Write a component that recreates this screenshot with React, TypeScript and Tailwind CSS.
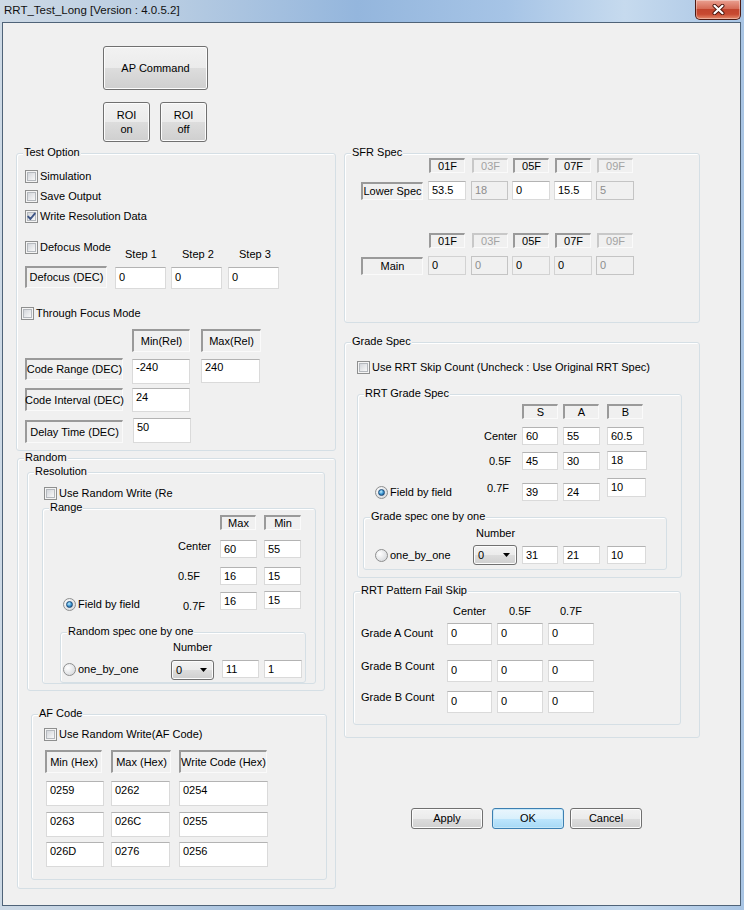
import React from "react";

const cx = (...a: (string | false | undefined | null)[]) => a.filter(Boolean).join(" ");

type P = { className?: string; children?: React.ReactNode };

function Group({ legend, className, children }: P & { legend: string }) {
  return (
    <div
      className={cx(
        "relative shrink-0 flex flex-col items-start border border-[#d5dfe5] rounded-[3px] shadow-[inset_1px_1px_0_#ffffff]",
        className
      )}
    >
      <span className="absolute top-[-8px] left-[6px] bg-[#f0f0f0] px-[1px] leading-[13px] whitespace-nowrap">
        {legend}
      </span>
      {children}
    </div>
  );
}

function Chk({ checked, label, className }: { checked?: boolean; label: string; className?: string }) {
  return (
    <div className={cx("flex items-center h-[13px] shrink-0", className)}>
      <span className="relative w-[13px] h-[13px] shrink-0 border border-[#8e8f8f] bg-[#f4f4f4] p-[1px] flex">
        <span className="flex-1 border border-[#b4b8bd] bg-[linear-gradient(135deg,#d3d6db,#f8f8f8)]" />
        {checked && (
          <svg className="absolute left-[0px] top-[0px]" width="11" height="11" viewBox="0 0 11 11">
            <path d="M2.2 5.6 L4.4 8 L8.8 2.6" fill="none" stroke="#3d5586" strokeWidth="1.9" strokeLinecap="round" strokeLinejoin="round" />
          </svg>
        )}
      </span>
      <span className="ml-[2px] whitespace-nowrap">{label}</span>
    </div>
  );
}

function Radio({ checked, label, className }: { checked?: boolean; label: string; className?: string }) {
  return (
    <div className={cx("flex items-center h-[13px] shrink-0", className)}>
      <span className="relative w-[13px] h-[13px] shrink-0 rounded-full border border-[#8e8f8f] bg-[radial-gradient(circle_at_35%_35%,#ffffff,#cfd2d6)]">
        {checked && (
          <span className="absolute left-[2px] top-[2px] w-[7px] h-[7px] rounded-full border border-[#1c4a78] bg-[radial-gradient(circle_at_40%_35%,#c4efff_0%,#3d98d4_50%,#143f73_100%)]" />
        )}
      </span>
      <span className="ml-[2px] whitespace-nowrap">{label}</span>
    </div>
  );
}

function Lbl({ children, className, dis }: P & { dis?: boolean }) {
  return (
    <div
      className={cx(
        "shrink-0 flex items-center justify-center whitespace-nowrap border-t-2 border-l-2 border-r border-b border-r-[#fafafa] border-b-[#fafafa]",
        dis ? "border-t-[#c8c8c8] border-l-[#c8c8c8] text-[#a3a3a3]" : "border-t-[#9a9a9a] border-l-[#9a9a9a]",
        className
      )}
    >
      {children}
    </div>
  );
}

function Edit({ v, className, dis, ro }: { v: string; className?: string; dis?: boolean; ro?: boolean }) {
  return (
    <div
      className={cx(
        "shrink-0 border pl-[3px] leading-[13px] whitespace-nowrap overflow-hidden",
        dis
          ? "bg-[#f0f0f0] border-[#c4c4c4] text-[#8d8d8d]"
          : ro
          ? "bg-[#f0f0f0] border-[#d2d2d2]"
          : "bg-white border-[#dadada] border-t-[#b3b3b3]",
        className
      )}
    >
      {v}
    </div>
  );
}

function Btn({ children, className, def }: P & { def?: boolean }) {
  return (
    <div
      className={cx(
        "shrink-0 flex items-center justify-center text-center rounded-[3px] border leading-[13px]",
        def
          ? "border-[#3c7fb1] bg-[linear-gradient(#eaf6fd_0%,#d9f0fc_50%,#bee6fd_50%,#a7d9f5_100%)] shadow-[inset_0_0_0_1px_#c6e7f8]"
          : "border-[#707070] bg-[linear-gradient(#f2f2f2_0%,#ebebeb_50%,#dddddd_50%,#cfcfcf_100%)] shadow-[inset_0_0_0_1px_#fcfcfc]",
        className
      )}
    >
      {children}
    </div>
  );
}

function Combo({ v, className }: { v: string; className?: string }) {
  return (
    <div
      className={cx(
        "shrink-0 flex items-center justify-between rounded-[3px] border border-[#707070] bg-[linear-gradient(#f2f2f2_0%,#ebebeb_50%,#dddddd_50%,#cfcfcf_100%)] shadow-[inset_0_0_0_1px_#fcfcfc] pl-[4px] pr-[6px]",
        className
      )}
    >
      <span>{v}</span>
      <svg width="7" height="4" viewBox="0 0 7 4">
        <path d="M0 0 H7 L3.5 4 Z" fill="#000" />
      </svg>
    </div>
  );
}

function HdrRow({ className }: { className?: string }) {
  return (
    <div className={cx("flex items-start ml-[84px]", className)}>
      <Lbl className="w-[36px] h-[15px]">01F</Lbl>
      <Lbl dis className="ml-[7px] w-[36px] h-[15px]">03F</Lbl>
      <Lbl className="ml-[5px] w-[36px] h-[15px]">05F</Lbl>
      <Lbl className="ml-[6px] w-[36px] h-[15px]">07F</Lbl>
      <Lbl dis className="ml-[6px] w-[36px] h-[15px]">09F</Lbl>
    </div>
  );
}

export default function App() {
  return (
    <div className="w-[744px] h-[910px] flex flex-col overflow-hidden bg-[linear-gradient(90deg,#cdd9e5_0%,#b9cde2_22%,#94b6dd_48%,#a6c4e6_68%,#c6daee_84%,#a9c5e4_100%)] font-['Liberation_Sans',Arial,sans-serif] text-[11px] leading-[13px] text-black">
      {/* title bar */}
      <div className="h-[22px] shrink-0 flex items-start">
        <div className="pl-[4px] pt-[3px] text-[11.5px] leading-[15px] whitespace-nowrap text-[#111]">
          RRT_Test_Long [Version : 4.0.5.2]
        </div>
        <div className="ml-auto mr-[3px] w-[46px] h-[20px] rounded-b-[5px] border border-t-0 border-[#4d1a12] bg-[linear-gradient(#eaa192_0%,#d66c57_45%,#c2452e_50%,#c84a31_75%,#e58a6c_100%)] shadow-[inset_0_0_0_1px_rgba(255,255,255,0.35)] flex items-center justify-center">
          <svg width="13" height="11" viewBox="0 0 13 11">
            <path d="M2.5 1.8 L10.5 9.2 M10.5 1.8 L2.5 9.2" stroke="#4a140c" strokeWidth="4" strokeLinecap="round" />
            <path d="M2.5 1.8 L10.5 9.2 M10.5 1.8 L2.5 9.2" stroke="#ffffff" strokeWidth="2.2" strokeLinecap="round" />
          </svg>
        </div>
      </div>

      {/* client area */}
      <div className="ml-[2px] mr-[3px] h-[884px] shrink-0 border border-[#4f6378] bg-[#f0f0f0] flex items-start">
        {/* left column */}
        <div className="ml-[13px] w-[320px] shrink-0 flex flex-col items-start">
          <Btn className="ml-[87px] mt-[23px] w-[105px] h-[44px]">AP Command</Btn>
          <div className="ml-[87px] mt-[12px] flex gap-[10px]">
            <Btn className="w-[47px] h-[40px] leading-[14px]">
              <span>
                ROI
                <br />
                on
              </span>
            </Btn>
            <Btn className="w-[47px] h-[40px] leading-[14px]">
              <span>
                ROI
                <br />
                off
              </span>
            </Btn>
          </div>

          <Group legend="Test Option" className="mt-[11px] w-[320px] h-[298px]">
            <Chk className="mt-[16px] ml-[8px]" label="Simulation" />
            <Chk className="mt-[7px] ml-[8px]" label="Save Output" />
            <Chk className="mt-[7px] ml-[8px]" checked label="Write Resolution Data" />

            <div className="mt-[17px] ml-[8px] flex items-start">
              <Chk className="mt-[1px] w-[100px]" label="Defocus Mode" />
              <div className="mt-[8px] w-[57px]">Step 1</div>
              <div className="mt-[8px] w-[57px]">Step 2</div>
              <div className="mt-[8px] w-[57px]">Step 3</div>
            </div>

            <div className="mt-[5px] ml-[8px] flex items-start">
              <Lbl className="w-[82px] h-[22px]">Defocus (DEC)</Lbl>
              <Edit v="0" className="ml-[8px] mt-[1px] w-[51px] h-[22px] pt-[3px]" />
              <Edit v="0" className="ml-[5px] mt-[1px] w-[51px] h-[22px] pt-[3px]" />
              <Edit v="0" className="ml-[6px] mt-[1px] w-[51px] h-[22px] pt-[3px]" />
            </div>

            <Chk className="mt-[18px] ml-[4px]" label="Through Focus Mode" />

            <div className="mt-[9px] ml-[115px] flex items-start">
              <Lbl className="w-[58px] h-[23px]">Min(Rel)</Lbl>
              <Lbl className="ml-[11px] w-[60px] h-[23px]">Max(Rel)</Lbl>
            </div>

            <div className="mt-[6px] ml-[8px] flex items-start">
              <Lbl className="w-[98px] h-[22px]">Code Range (DEC)</Lbl>
              <Edit v="-240" className="ml-[9px] mt-[1px] w-[58px] h-[25px] pt-[1px]" />
              <Edit v="240" className="ml-[11px] mt-[1px] w-[59px] h-[24px] pt-[1px]" />
            </div>

            <div className="mt-[4px] ml-[8px] flex items-start">
              <Lbl className="w-[98px] h-[23px]">Code Interval (DEC)</Lbl>
              <Edit v="24" className="ml-[9px] w-[58px] h-[24px] pt-[2px]" />
            </div>

            <div className="mt-[6px] ml-[8px] flex items-start">
              <Lbl className="mt-[2px] w-[98px] h-[23px]">Delay Time (DEC)</Lbl>
              <Edit v="50" className="ml-[10px] w-[58px] h-[25px] pt-[2px]" />
            </div>
          </Group>

          <Group legend="Random" className="mt-[7px] ml-[1px] w-[319px] h-[431px]">
            <Group legend="Resolution" className="ml-[9px] mt-[13px] w-[298px] h-[219px]">
              <Chk className="mt-[14px] ml-[16px]" label="Use Random Write (Re" />
              <Group legend="Range" className="ml-[14px] mt-[8px] w-[274px] h-[176px]">
                <div className="mt-[6px] ml-[177px] flex items-start">
                  <Lbl className="w-[36px] h-[15px]">Max</Lbl>
                  <Lbl className="ml-[8px] w-[37px] h-[15px]">Min</Lbl>
                </div>
                <div className="mt-[10px] flex items-start">
                  <div className="w-[170px] pr-[2px] text-right">Center</div>
                  <Edit v="60" className="ml-[7px] w-[37px] h-[18px] pt-[2px]" />
                  <Edit v="55" className="ml-[7px] w-[37px] h-[18px] pt-[2px]" />
                </div>
                <div className="mt-[9px] flex items-start">
                  <div className="ml-[135px] mt-[3px] w-[42px]">0.5F</div>
                  <Edit v="16" className="w-[37px] h-[18px] pt-[2px]" />
                  <Edit v="15" className="ml-[7px] w-[37px] h-[18px] pt-[2px]" />
                </div>
                <div className="mt-[7px] flex items-start">
                  <Radio checked className="ml-[20px] mt-[6px] w-[120px]" label="Field by field" />
                  <div className="mt-[8px] w-[37px]">0.7F</div>
                  <Edit v="16" className="w-[37px] h-[18px] pt-[2px]" />
                  <Edit v="15" className="ml-[7px] -mt-[1px] w-[37px] h-[18px] pt-[2px]" />
                </div>
                <Group legend="Random spec one by one" className="mt-[19px] ml-[17px] w-[246px] h-[51px]">
                  <div className="ml-[112px] mt-[8px]">Number</div>
                  <div className="mt-[6px] flex items-start">
                    <Radio className="ml-[2px] mt-[3px] w-[108px]" label="one_by_one" />
                    <Combo v="0" className="w-[43px] h-[20px]" />
                    <Edit v="11" className="ml-[8px] w-[37px] h-[18px] pt-[2px]" />
                    <Edit v="1" className="ml-[5px] w-[38px] h-[18px] pt-[2px]" />
                  </div>
                </Group>
              </Group>
            </Group>

            <Group legend="AF Code" className="ml-[13px] mt-[23px] w-[296px] h-[166px]">
              <Chk className="mt-[13px] ml-[12px]" label="Use Random Write(AF Code)" />
              <div className="mt-[9px] ml-[13px] flex items-start">
                <Lbl className="w-[57px] h-[23px]">Min (Hex)</Lbl>
                <Lbl className="ml-[9px] w-[60px] h-[23px]">Max (Hex)</Lbl>
                <Lbl className="ml-[8px] w-[88px] h-[23px]">Write Code (Hex)</Lbl>
              </div>
              <div className="mt-[8px] ml-[14px] flex items-start">
                <Edit v="0259" className="w-[58px] h-[25px] pt-[2px]" />
                <Edit v="0262" className="ml-[7px] w-[59px] h-[25px] pt-[2px]" />
                <Edit v="0254" className="ml-[9px] w-[89px] h-[25px] pt-[2px]" />
              </div>
              <div className="mt-[6px] ml-[14px] flex items-start">
                <Edit v="0263" className="w-[58px] h-[25px] pt-[2px]" />
                <Edit v="026C" className="ml-[7px] w-[59px] h-[25px] pt-[2px]" />
                <Edit v="0255" className="ml-[9px] w-[89px] h-[25px] pt-[2px]" />
              </div>
              <div className="mt-[5px] ml-[14px] flex items-start">
                <Edit v="026D" className="w-[58px] h-[25px] pt-[2px]" />
                <Edit v="0276" className="ml-[7px] w-[59px] h-[25px] pt-[2px]" />
                <Edit v="0256" className="ml-[9px] w-[89px] h-[25px] pt-[2px]" />
              </div>
            </Group>
          </Group>
        </div>

        {/* right column */}
        <div className="ml-[8px] w-[356px] shrink-0 flex flex-col items-start">
          <Group legend="SFR Spec" className="mt-[130px] w-[356px] h-[170px]">
            <HdrRow className="mt-[4px]" />
            <div className="mt-[8px] flex items-start">
              <Lbl className="ml-[16px] mt-[1px] w-[62px] h-[18px]">Lower Spec</Lbl>
              <Edit v="53.5" className="ml-[5px] w-[38px] h-[19px] pt-[2px]" />
              <Edit dis v="18" className="ml-[5px] w-[37px] h-[19px] pt-[2px]" />
              <Edit v="0" className="ml-[4px] w-[38px] h-[19px] pt-[2px]" />
              <Edit v="15.5" className="ml-[4px] w-[38px] h-[19px] pt-[2px]" />
              <Edit dis v="5" className="ml-[4px] w-[38px] h-[19px] pt-[2px]" />
            </div>
            <HdrRow className="mt-[33px]" />
            <div className="mt-[8px] flex items-start">
              <Lbl className="ml-[16px] mt-[1px] w-[62px] h-[18px]">Main</Lbl>
              <Edit ro v="0" className="ml-[5px] w-[38px] h-[19px] pt-[2px]" />
              <Edit dis v="0" className="ml-[5px] w-[37px] h-[19px] pt-[2px]" />
              <Edit ro v="0" className="ml-[4px] w-[38px] h-[19px] pt-[2px]" />
              <Edit ro v="0" className="ml-[4px] w-[38px] h-[19px] pt-[2px]" />
              <Edit dis v="0" className="ml-[4px] w-[38px] h-[19px] pt-[2px]" />
            </div>
          </Group>

          <Group legend="Grade Spec" className="mt-[19px] w-[356px] h-[396px]">
            <Chk className="mt-[18px] ml-[12px]" label="Use RRT Skip Count (Uncheck : Use Original RRT Spec)" />
            <Group legend="RRT Grade Spec" className="ml-[12px] mt-[20px] w-[325px] h-[184px]">
              <div className="mt-[9px] ml-[164px] flex items-start">
                <Lbl className="w-[36px] h-[15px]">S</Lbl>
                <Lbl className="ml-[5px] w-[36px] h-[15px]">A</Lbl>
                <Lbl className="ml-[8px] w-[36px] h-[15px]">B</Lbl>
              </div>
              <div className="mt-[8px] flex items-start">
                <div className="mt-[3px] w-[159px] text-right">Center</div>
                <Edit v="60" className="ml-[5px] w-[36px] h-[18px] pt-[2px]" />
                <Edit v="55" className="ml-[5px] w-[37px] h-[18px] pt-[2px]" />
                <Edit v="60.5" className="ml-[7px] w-[37px] h-[18px] pt-[2px]" />
              </div>
              <div className="mt-[7px] flex items-start">
                <div className="mt-[3px] w-[153px] text-right">0.5F</div>
                <Edit v="45" className="ml-[11px] w-[36px] h-[18px] pt-[2px]" />
                <Edit v="30" className="ml-[5px] w-[37px] h-[18px] pt-[2px]" />
                <Edit v="18" className="ml-[7px] -mt-[1px] w-[40px] h-[19px] pt-[2px] border-[#a9bccf]" />
              </div>
              <div className="mt-[8px] flex items-start">
                <Radio checked className="ml-[17px] mt-[8px] w-[112px]" label="Field by field" />
                <div className="mt-[4px] w-[35px]">0.7F</div>
                <Edit v="39" className="mt-[5px] w-[36px] h-[18px] pt-[2px]" />
                <Edit v="24" className="ml-[5px] mt-[5px] w-[37px] h-[18px] pt-[2px]" />
                <Edit v="10" className="ml-[7px] w-[39px] h-[19px] pt-[2px]" />
              </div>
              <Group legend="Grade spec one by one" className="ml-[5px] mt-[16px] w-[304px] h-[53px]">
                <div className="ml-[112px] mt-[9px]">Number</div>
                <div className="mt-[5px] flex items-start">
                  <Radio className="ml-[11px] mt-[4px] w-[98px]" label="one_by_one" />
                  <Combo v="0" className="w-[44px] h-[20px]" />
                  <Edit v="31" className="ml-[5px] mt-[1px] w-[36px] h-[18px] pt-[2px]" />
                  <Edit v="21" className="ml-[5px] mt-[1px] w-[37px] h-[18px] pt-[2px]" />
                  <Edit v="10" className="ml-[7px] mt-[1px] w-[39px] h-[18px] pt-[2px]" />
                </div>
              </Group>
            </Group>

            <Group legend="RRT Pattern Fail Skip" className="ml-[8px] mt-[13px] w-[328px] h-[134px]">
              <div className="mt-[13px] flex items-start">
                <div className="ml-[93px] w-[45px] text-center">Center</div>
                <div className="ml-[5px] w-[46px] text-center">0.5F</div>
                <div className="ml-[5px] w-[46px] text-center">0.7F</div>
              </div>
              <div className="mt-[5px] flex items-start">
                <div className="ml-[7px] mt-[4px] w-[86px] whitespace-nowrap">Grade A Count</div>
                <Edit v="0" className="w-[45px] h-[22px] pt-[3px]" />
                <Edit v="0" className="ml-[5px] w-[46px] h-[22px] pt-[3px]" />
                <Edit v="0" className="ml-[5px] w-[46px] h-[22px] pt-[3px]" />
              </div>
              <div className="mt-[15px] flex items-start">
                <div className="ml-[7px] w-[86px] whitespace-nowrap">Grade B Count</div>
                <Edit v="0" className="w-[45px] h-[22px] pt-[3px]" />
                <Edit v="0" className="ml-[5px] w-[46px] h-[22px] pt-[3px]" />
                <Edit v="0" className="ml-[5px] w-[46px] h-[22px] pt-[3px]" />
              </div>
              <div className="mt-[9px] flex items-start">
                <div className="ml-[7px] w-[86px] whitespace-nowrap">Grade B Count</div>
                <Edit v="0" className="w-[45px] h-[22px] pt-[3px]" />
                <Edit v="0" className="ml-[5px] w-[46px] h-[22px] pt-[3px]" />
                <Edit v="0" className="ml-[5px] w-[46px] h-[22px] pt-[3px]" />
              </div>
            </Group>
          </Group>

          <div className="mt-[70px] ml-[67px] flex items-start">
            <Btn className="w-[72px] h-[21px]">Apply</Btn>
            <Btn def className="ml-[9px] w-[72px] h-[21px]">OK</Btn>
            <Btn className="ml-[6px] w-[72px] h-[21px]">Cancel</Btn>
          </div>
        </div>
      </div>
    </div>
  );
}
